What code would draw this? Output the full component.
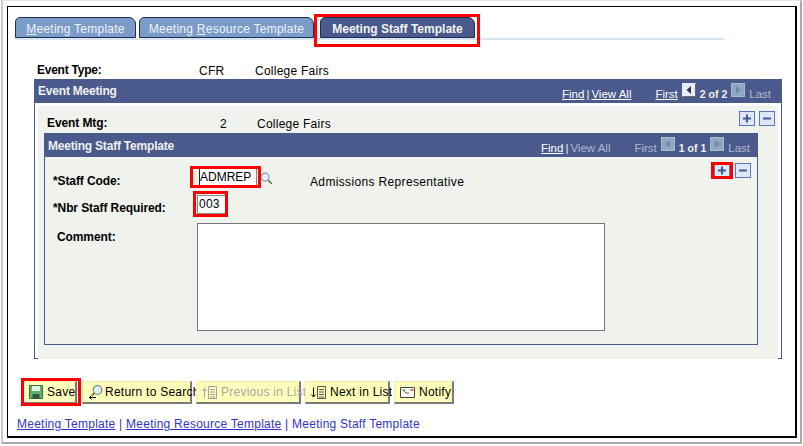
<div class="shell">
    <div class="frame">
        <div class="tabbar">
            <div class="tab t1"><u>M</u>eeting Template</div>
            <div class="tab t2">Meeting <u>R</u>esource Template</div>
            <div class="tab active">Meeting Staff Template</div>
        </div>

        <div class="summary">
            <span class="lbl">Event Type:</span>
            <span class="code">CFR</span>
            <span class="val">College Fairs</span>
        </div>

        <section class="panel outer">
            <header>
                <span class="title">Event Meeting</span>
                <nav>
                    <a href="#find">Find</a><i>|</i><a href="#all">View All</a>
                    <a class="first" href="#first">First</a>
                    <span class="arrow on">
                        <svg viewBox="0 0 12 12"><path d="M8 2v8L3.500 6z" /></svg>
                    </span>
                    <b>2 of 2</b>
                    <span class="arrow off">
                        <svg viewBox="0 0 12 12"><path d="M4 2v8l4.500-4z" /></svg>
                    </span>
                    <span class="dim">Last</span>
                </nav>
            </header>
            <div class="well">
                <div class="mtg-row">
                    <span class="lbl">Event Mtg:</span>
                    <span class="num">2</span>
                    <span class="val">College Fairs</span>
                    <div class="pm">
                        <span class="sq"><svg viewBox="0 0 14 13"><path d="M6 2.500h2v3h3v2H8v3H6v-3H3v-2h3z" /></svg></span>
                        <span class="sq"><svg viewBox="0 0 14 13"><path d="M3 5.500h8v2H3z" /></svg></span>
                    </div>
                </div>

                <section class="panel inner">
                    <header>
                        <span class="title">Meeting Staff Template</span>
                        <nav>
                            <a href="#find">Find</a><i>|</i><span class="dim">View All</span>
                            <span class="dim first">First</span>
                            <span class="arrow off">
                                <svg viewBox="0 0 12 12"><path d="M8 2v8L3.500 6z" /></svg>
                            </span>
                            <b>1 of 1</b>
                            <span class="arrow off">
                                <svg viewBox="0 0 12 12"><path d="M4 2v8l4.500-4z" /></svg>
                            </span>
                            <span class="dim">Last</span>
                        </nav>
                    </header>
                    <div class="form">
                        <div class="pm inner-pm">
                            <span class="sq"><svg viewBox="0 0 14 13"><path d="M6 2.500h2v3h3v2H8v3H6v-3H3v-2h3z" /></svg></span>
                            <span class="sq"><svg viewBox="0 0 14 13"><path d="M3 5.500h8v2H3z" /></svg></span>
                        </div>
                        <div class="field code-row">
                            <div class="lbl">*Staff Code:</div>
                            <div class="input staff">ADMREP</div>
                            <svg class="lens" viewBox="0 0 14 14">
                                <circle cx="5.500" cy="5.500" r="4.300" fill="#e4f0f8" stroke="#8a9aa4" stroke-width="1.200" />
                                <path d="M8.800 8.800l4 4" stroke="#6f7f4c" stroke-width="2" />
                            </svg>
                            <span class="desc">Admissions Representative</span>
                        </div>
                        <div class="field nbr-row">
                            <div class="lbl">*Nbr Staff Required:</div>
                            <div class="input nbr">003</div>
                        </div>
                        <div class="field comment-row">
                            <div class="lbl">Comment:</div>
                            <div class="textarea"></div>
                        </div>
                    </div>
                </section>
            </div>
        </section>

        <div class="toolbar">
            <button class="save">
                <svg viewBox="0 0 14 14"><path d="M.5.500h13v13H.5z" fill="#5fb073" stroke="#3c6a48" /><path d="M3 1h8v5H3z" fill="#e4f2e0" /><path d="M3.500 9h7v4.500h-7z" fill="#2f5a3a" /></svg>
                <span>Save</span>
            </button>
            <button class="search">
                <svg class="wide" viewBox="0 0 15 15"><circle cx="9.500" cy="5" r="4.300" fill="#e0eef8" stroke="#7c8c94" stroke-width="1.200" /><path d="M6.500 8l-2.500 2.500" stroke="#6f7f4c" stroke-width="2" /><path d="M8 12.500H1.500M3.500 10.500l-2 2 2 2" fill="none" stroke="#000" /></svg>
                <span>Return to Search</span>
            </button>
            <button class="prev disabled">
                <svg class="wide" viewBox="0 0 15 15"><path d="M2.500 13V3.500M.5 6l2-2.500 2 2.500" fill="none" stroke="#a0a0a0" /><path d="M6.500 1.500h8v12h-8zM8 4.500h5M8 7h5M8 9.500h5M8 12h5" fill="none" stroke="#a0a0a0" /></svg>
                <span>Previous in List</span>
            </button>
            <button class="next">
                <svg class="wide" viewBox="0 0 15 15"><path d="M2.500 2.500V12M.5 9.500l2 2.500 2-2.500" fill="none" stroke="#000" /><path d="M6.500 1.500h8v12h-8zM8 4.500h5M8 7h5M8 9.500h5M8 12h5" fill="none" stroke="#555" /></svg>
                <span>Next in List</span>
            </button>
            <button class="notify">
                <svg class="wide" viewBox="0 0 15 13"><path d="M.5 1.500h14v10H.5z" fill="#fffff0" stroke="#444" /><path d="M2.500 4h3l0 0M3 4l3 3h3" stroke="#666" fill="none" /><path d="M10.500 3h3v2h-3z" fill="#d86a6a" /></svg>
                <span>Notify</span>
            </button>
        </div>

        <div class="links">
            <a href="#a">Meeting Template</a> | <a href="#b">Meeting Resource Template</a> | <span>Meeting Staff Template</span>
        </div>
    </div>

    <!-- red annotation boxes drawn on top of the screenshot -->
    <div class="mark m-tab"></div>
    <div class="mark m-code"></div>
    <div class="mark m-nbr"></div>
    <div class="mark m-plus"></div>
    <div class="mark m-save"></div>
</div>

<style>
    :global(body) {
        background: #fff;
        font-family: "Liberation Sans", Arial, sans-serif;
        font-size: 12px;
        letter-spacing: 0.25px;
        color: #000;
    }

    .shell {
        position: relative;
        width: 803px;
        height: 446px;
        box-sizing: border-box;
        padding: 6px 7px 8px 7px;
        overflow: hidden;
    }

    .shell::before {
        content: "";
        position: absolute;
        left: 1px;
        top: 0;
        right: 1px;
        bottom: 2px;
        border: 1px solid #e4e4e4;
        border-right: 2px solid #aaa;
        border-bottom: 2px solid #aaa;
        border-left: 2px solid #c8c8c8;
    }

    .frame {
        position: relative;
        box-sizing: border-box;
        width: 790px;
        height: 432px;
        border: 1px solid #000;
        border-width: 1px 2px 2px 1px;
        background: #fff;
        padding: 10px 0 0 7px;
    }

    .tabbar {
        display: flex;
        width: 709px;
        height: 21px;
        gap: 3px;
        border-bottom: 2px solid #d8e4f2;
    }

    .tab {
        box-sizing: border-box;
        height: 21px;
        padding-top: 4px;
        text-align: center;
        color: #eef2fa;
        background: #7b9cc8;
        border: 1px solid #1f2f50;
        border-radius: 5px 7px 0 0;
    }

    .t1 {
        width: 121px;
    }

    .t2 {
        width: 175px;
    }

    .tab.active {
        width: 155px;
        margin-left: 3px;
        background: #4a5a8c;
        color: #f2f2f2;
        font-weight: bold;
        letter-spacing: 0;
    }

    .summary {
        display: flex;
        height: 16px;
        margin: 22px 0 0 22px;
        align-items: center;
    }

    .lbl {
        font-weight: bold;
        letter-spacing: -0.1px;
    }

    .summary .lbl {
        width: 162px;
        letter-spacing: -0.25px;
    }

    .summary .code {
        width: 56px;
        padding-top: 1px;
    }

    .val {
        padding-top: 1px;
    }

    .panel {
        box-sizing: border-box;
        border: 1px solid #4a5a8c;
    }

    .panel header {
        display: flex;
        justify-content: space-between;
        align-items: center;
        height: 24px;
        margin: -1px -1px 0;
        background: #4a5a8c;
        color: #f0f0f0;
    }

    .title {
        font-weight: bold;
        letter-spacing: 0;
        padding-left: 4px;
    }

    .outer .title {
        letter-spacing: -0.2px;
    }

    nav {
        display: flex;
        align-items: center;
        font-size: 11.500px;
        letter-spacing: 0;
        padding: 6px 11px 0 0;
    }

    nav a {
        color: #fff;
    }

    nav i {
        font-style: normal;
        margin: 0 2px;
    }

    nav b {
        margin: 0 4px;
        font-size: 10.500px;
    }

    .first {
        margin-left: 24px;
        margin-right: 4px;
    }

    .dim {
        color: #b0b8cc;
    }

    .arrow {
        display: inline-flex;
        align-items: center;
        justify-content: center;
        width: 14px;
        height: 14px;
        margin-top: -8px;
        box-sizing: border-box;
        border: 1px solid #a8bacc;
    }

    .arrow svg {
        width: 12px;
        height: 12px;
    }

    .arrow.on {
        background: #e8eef8;
        border-color: #e8eef8 #667 #667 #e8eef8;
        fill: #334;
    }

    .arrow.off {
        background: #8fa8c0;
        fill: #7089aa;
    }

    .arrow.off + .dim {
        margin-left: 4px;
    }

    .inner nav {
        padding-right: 8px;
    }

    .outer {
        width: 748px;
        height: 280px;
        margin: 1px 0 0 19px;
    }

    .well {
        box-sizing: border-box;
        height: 253px;
        margin: 3px 3px 0;
        padding: 0 0 0 6px;
        background: #f0f2ee;
    }

    .mtg-row {
        display: flex;
        align-items: flex-end;
        box-sizing: border-box;
        height: 27px;
        padding: 0 0 2px 3px;
    }

    .mtg-row .lbl {
        width: 173px;
        margin-bottom: 1px;
    }

    .mtg-row .num {
        width: 37px;
    }

    .pm {
        display: flex;
        gap: 4px;
        align-self: flex-start;
        margin: 5px 3px 0 auto;
    }

    .sq {
        display: block;
        box-sizing: border-box;
        width: 16px;
        height: 15px;
        background: #dfe8f6;
        border: 1px solid #5c74b8;
    }

    .sq svg {
        display: block;
        width: 14px;
        height: 13px;
        fill: #3f5a96;
    }

    .inner {
        width: 714px;
        height: 212px;
    }

    .inner .title {
        padding: 1px 0 0 4px;
    }

    .form {
        position: relative;
        padding: 11px 0 0 0;
    }

    .inner-pm {
        position: absolute;
        top: 6px;
        right: 6px;
        margin: 0;
        gap: 5px;
    }

    .field {
        display: flex;
        align-items: flex-start;
    }

    .field .lbl {
        box-sizing: border-box;
        width: 152px;
        padding: 6px 0 0 8px;
    }

    .code-row {
        height: 18px;
    }

    .input {
        box-sizing: border-box;
        padding: 1px 0 0 1px;
        background: #fff;
        border: 1px solid #888;
    }

    .staff {
        width: 58px;
        height: 18px;
        margin-left: 2px;
        padding-left: 0;
        letter-spacing: 0;
        border-left-color: #222;
    }

    .lens {
        width: 13px;
        height: 13px;
        margin: 4px 0 0 3px;
    }

    .desc {
        margin-left: 37px;
        padding-top: 7px;
        letter-spacing: 0.35px;
    }

    .nbr-row {
        margin-top: 9px;
        height: 19px;
    }

    .nbr {
        width: 29px;
        height: 19px;
        padding-left: 1px;
    }

    .comment-row {
        margin-top: 9px;
    }

    .comment-row .lbl {
        padding: 7px 0 0 12px;
    }

    .textarea {
        box-sizing: border-box;
        width: 408px;
        height: 108px;
        background: #fff;
        border: 1px solid #777;
    }

    .toolbar {
        display: flex;
        gap: 4px;
        margin: 22px 0 0 8px;
    }

    button {
        display: flex;
        align-items: center;
        gap: 4px;
        box-sizing: border-box;
        height: 23px;
        padding: 0 0 0 5px;
        white-space: nowrap;
        background: #ffffbb;
        border: 1px solid #ededa8;
        border-right: 2px solid #7a7a7a;
        border-bottom: 2px solid #7a7a7a;
        font: 12px "Liberation Sans", Arial, sans-serif;
        letter-spacing: 0.25px;
        color: #000;
    }

    button svg {
        flex: none;
        width: 14px;
        height: 14px;
    }

    button svg.wide {
        width: 15px;
        height: 15px;
    }

    .save {
        width: 54px;
        margin-right: 1px;
    }

    .search {
        width: 110px;
        gap: 2px;
    }

    .prev {
        width: 105px;
    }

    .disabled {
        color: #a8a8a0;
    }

    .next {
        width: 85px;
    }

    .notify {
        width: 60px;
    }

    .links {
        margin: 13px 0 0 2px;
        color: #3333cc;
    }

    .links a {
        color: #3333cc;
    }

    .mark {
        position: absolute;
        box-sizing: border-box;
        border: 3px solid #f00;
    }

    .m-tab {
        left: 314px;
        top: 14px;
        width: 166px;
        height: 33px;
    }

    .m-code {
        left: 190px;
        top: 166px;
        width: 71px;
        height: 22px;
    }

    .m-nbr {
        left: 193px;
        top: 191px;
        width: 35px;
        height: 26px;
    }

    .m-plus {
        left: 711px;
        top: 162px;
        width: 22px;
        height: 17px;
    }

    .m-save {
        left: 21px;
        top: 378px;
        width: 60px;
        height: 28px;
    }
</style>
